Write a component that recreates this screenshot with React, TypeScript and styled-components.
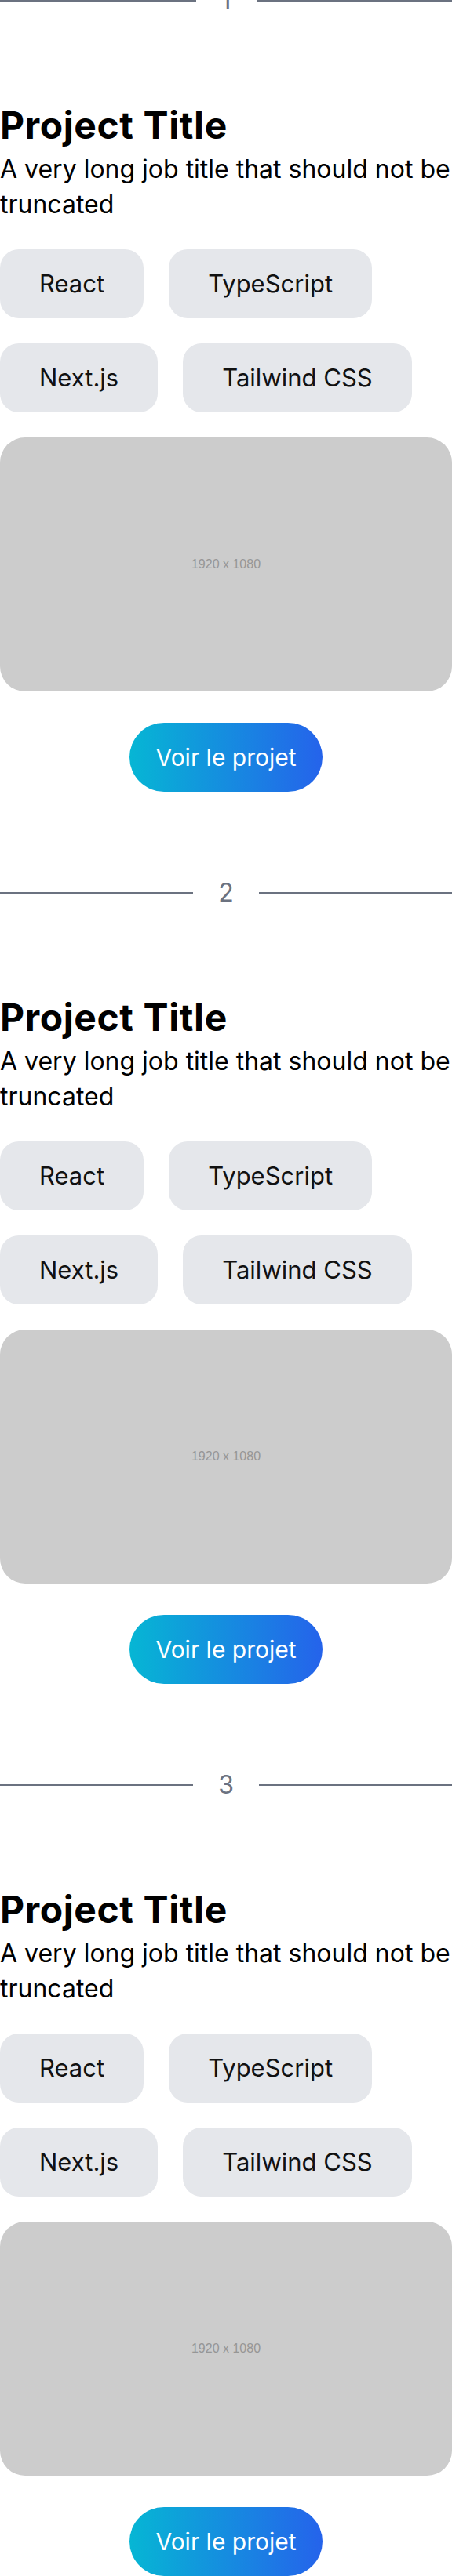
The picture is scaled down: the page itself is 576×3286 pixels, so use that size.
import React from 'react';
import styled, { createGlobalStyle } from 'styled-components';

const GlobalStyle = createGlobalStyle`
  html, body {
    margin: 0;
    padding: 0;
    background: #ffffff;
  }
  body {
    font-family: Inter, 'Noto Sans', sans-serif;
    color: #000;
  }
`;

const Page = styled.main`
  width: 576px;
  margin-top: -19px;
  display: flex;
  flex-direction: column;
`;

const Section = styled.section`
  display: flex;
  flex-direction: column;
  padding-bottom: 109px;
`;

const Divider = styled.div`
  display: flex;
  align-items: center;
  height: 40px;
  margin-bottom: 115px;
`;

const Rule = styled.span`
  flex: 1;
  height: 2px;
  background: #6b7280;
`;

const Index = styled.span`
  padding: 0 32px;
  font-size: 32px;
  line-height: 40px;
  color: #6b7280;
`;

const Title = styled.h2`
  margin: 0 0 9px;
  font-size: 48px;
  line-height: 48px;
  font-weight: 700;
  letter-spacing: 0.6px;
`;

const Subtitle = styled.p`
  margin: 0 0 35px;
  font-size: 32px;
  line-height: 45px;
`;

const Tags = styled.ul`
  display: flex;
  flex-wrap: wrap;
  gap: 32px;
  margin: 0 0 32px;
  padding: 0;
  list-style: none;
`;

const Tag = styled.li`
  padding: 20px 50px;
  border-radius: 24px;
  background: #e5e7eb;
  font-size: 31px;
  line-height: 48px;
  color: #111;
`;

const Placeholder = styled.div`
  height: 324px;
  border-radius: 32px;
  background: #cccccc;
  display: flex;
  align-items: center;
  justify-content: center;
  font-family: 'Liberation Sans', Arial, sans-serif;
  font-size: 16px;
  color: #969696;
  margin-bottom: 40px;
`;

const Actions = styled.div`
  display: flex;
  justify-content: center;
`;

const ViewButton = styled.a`
  display: inline-block;
  padding: 20px 33px;
  border-radius: 9999px;
  background: linear-gradient(to right, #06b6d4, #2563eb);
  color: #fff;
  font-size: 30px;
  line-height: 48px;
  text-decoration: none;
`;

const tags = ['React', 'TypeScript', 'Next.js', 'Tailwind CSS'];

function ProjectCard({ index }: { index: number }) {
  return (
    <Section>
      <Divider>
        <Rule />
        <Index>{index}</Index>
        <Rule />
      </Divider>
      <Title>Project Title</Title>
      <Subtitle>A very long job title that should not be truncated</Subtitle>
      <Tags>
        {tags.map(t => (
          <Tag key={t}>{t}</Tag>
        ))}
      </Tags>
      <Placeholder>1920 x 1080</Placeholder>
      <Actions>
        <ViewButton href="#">Voir le projet</ViewButton>
      </Actions>
    </Section>
  );
}

export default function App() {
  return (
    <>
      <GlobalStyle />
      <Page>
        {[1, 2, 3].map(i => (
          <ProjectCard key={i} index={i} />
        ))}
      </Page>
    </>
  );
}
